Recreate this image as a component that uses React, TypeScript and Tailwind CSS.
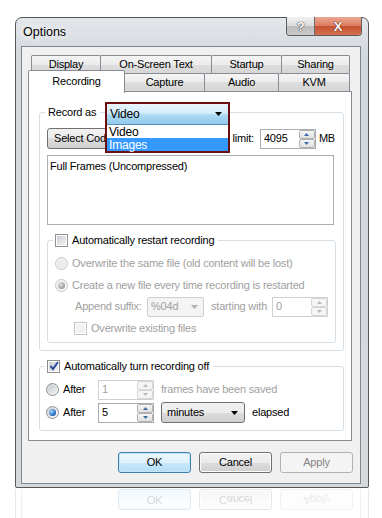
import React from "react";

const F = "font-['Liberation_Sans',Arial,sans-serif] text-[11px] leading-none tracking-[-0.2px]";
const DIS = "text-[#a0a0a0]";

function Spin({ disabled }: { disabled?: boolean }) {
  const arrow = disabled ? "#b8b8b8" : "#3f6aa8";
  const btn = `h-[9px] flex items-center justify-center border rounded-[2px] ${
    disabled ? "border-[#d6d6d6] bg-[#f5f5f5]" : "border-[#b0b0b0] bg-[linear-gradient(#f6f6f6,#e0e0e0)]"
  }`;
  return (
    <div className="w-[16px] h-full flex flex-col">
      <div className={btn}>
        <svg width="5" height="3" viewBox="0 0 5 3">
          <path d="M0 3H5L2.5 0Z" fill={arrow} />
        </svg>
      </div>
      <div className={btn}>
        <svg width="5" height="3" viewBox="0 0 5 3">
          <path d="M0 0H5L2.5 3Z" fill={arrow} />
        </svg>
      </div>
    </div>
  );
}

function SpinInput({ value, disabled, w }: { value: string; disabled?: boolean; w: string }) {
  return (
    <div className={`flex h-[20px] ${w} border ${disabled ? "border-[#d0d0d0]" : "border-[#abadb3]"} bg-white shrink-0`}>
      <div className={`flex-1 flex items-center pl-[3px] ${disabled ? DIS : "text-black"}`}>{value}</div>
      <Spin disabled={disabled} />
    </div>
  );
}

function CheckBox({ checked, disabled }: { checked?: boolean; disabled?: boolean }) {
  return (
    <div
      className={`relative w-[13px] h-[13px] shrink-0 border bg-white p-[1px] ${
        disabled ? "border-[#c4c4c4]" : "border-[#8e8f8f]"
      }`}
    >
      <div
        className={`w-full h-full ${
          disabled ? "bg-[#f2f2f2]" : "bg-[linear-gradient(135deg,#c9cdd3,#f3f3f3)]"
        }`}
      />
      {checked && (
        <svg className="absolute left-[1px] top-[0px]" width="10" height="10" viewBox="0 0 10 10">
          <path d="M1.5 5 L4 8 L9 1" stroke="#2c4d9c" strokeWidth="2" fill="none" />
        </svg>
      )}
    </div>
  );
}

function Radio({ checked, disabled }: { checked?: boolean; disabled?: boolean }) {
  return (
    <div
      className={`w-[13px] h-[13px] shrink-0 rounded-full border flex items-center justify-center ${
        disabled ? "border-[#c6c6c6] bg-[#f4f4f4]" : "border-[#8e8f8f] bg-[linear-gradient(135deg,#d4d4d4,#fbfbfb)]"
      }`}
    >
      {checked ? (
        disabled ? (
          <div className="w-[7px] h-[7px] rounded-full bg-[radial-gradient(circle_at_35%_35%,#e0e0e0,#9a9a9a_75%)]" />
        ) : (
          <div className="w-[7px] h-[7px] rounded-full bg-[radial-gradient(circle_at_35%_35%,#a8d8ff,#1b5cb6_70%)]" />
        )
      ) : (
        <div
          className={`w-[9px] h-[9px] rounded-full ${
            disabled ? "bg-[#ececec]" : "bg-[linear-gradient(135deg,#c8ccd1,#f0f0f0)]"
          }`}
        />
      )}
    </div>
  );
}

function Btn({ label, kind, w = "w-[73px]" }: { label: string; kind: "default" | "normal" | "disabled"; w?: string }) {
  const cls =
    kind === "default"
      ? "border-[#3c7fb1] bg-[linear-gradient(#eef7fd,#dff1fb_50%,#c9e8fa_50%,#b5def5)] text-black shadow-[inset_0_0_0_1px_#c4e5f6]"
      : kind === "normal"
      ? "border-[#707070] bg-[linear-gradient(#f2f2f2,#ebebeb_50%,#dddddd_50%,#cfcfcf)] text-black shadow-[inset_0_0_0_1px_#fbfbfb]"
      : "border-[#adb2b5] bg-[#f4f4f4] text-[#838383]";
  return (
    <div className={`${w} h-[21px] rounded-[3px] border flex items-center justify-center ${cls}`}>{label}</div>
  );
}

function Tab({ label, w, first }: { label: string; w: string; first?: boolean }) {
  return (
    <div
      className={`${w} h-[18px] ${first ? "" : "-ml-px"} border border-b-0 border-[#898c95] rounded-t-[2px] bg-[linear-gradient(#f4f4f4,#ececec_50%,#dedede_50%,#d6d6d6)] flex items-center justify-center text-black`}
    >
      {label}
    </div>
  );
}

function Legend({ children, cls }: { children: React.ReactNode; cls: string }) {
  return <div className={`absolute ${cls} flex items-center gap-[4px] bg-white pl-[2px] pr-[4px] h-[14px]`}>{children}</div>;
}

function ButtonsRow() {
  return (
    <div className="flex justify-end gap-[8px] pr-[7px]">
      <Btn label="OK" kind="default" />
      <Btn label="Cancel" kind="normal" />
      <Btn label="Apply" kind="disabled" />
    </div>
  );
}

export default function App() {
  return (
    <div className={`w-[382px] h-[518px] bg-white overflow-hidden pt-[17px] ${F}`}>
      {/* Window */}
      <div className="relative ml-[15px] w-[354px] h-[471px] border border-[#565656] rounded-t-[7px] rounded-b-[2px] bg-[linear-gradient(#e3e7eb,#d3d8dd_40px,#d6d9dc)]">
        {/* caption buttons */}
        <div className="absolute top-[-1px] right-[6px] flex h-[19px] border border-t-0 border-[#5d5d5d] rounded-b-[4px] overflow-hidden">
          <div className="w-[28px] h-full border-r border-[#6b6b6b] bg-[linear-gradient(#f2f2f2,#dadada_50%,#bcbcbc_50%,#c9c9c9)] flex items-center justify-center text-[13px] font-bold text-white [text-shadow:0_0_1px_#222,0_0_1px_#222]">
            ?
          </div>
          <div className="w-[46px] h-full bg-[linear-gradient(#eaa893,#dc7a5d_50%,#c5502f_50%,#d2714f)] flex items-center justify-center text-[13px] font-bold text-white [text-shadow:0_0_1px_#5a1000,0_0_1px_#5a1000]">
            X
          </div>
        </div>
        {/* title */}
        <div className="h-[28px] flex items-center pl-[7px]">
          <span className="text-[12.5px] tracking-normal text-black [text-shadow:0_0_6px_#ffffff,0_0_8px_#ffffff]">Options</span>
        </div>
        {/* client */}
        <div className="ml-[5px] w-[340px] h-[438px] border border-[#7d8893] bg-[#f0f0f0]">
          <div className="pt-[8px] pl-[6px]">
            <div className="w-[324px]">
              <div className="flex ml-[3px]">
                <Tab label="Display" w="w-[70px]" first />
                <Tab label="On-Screen Text" w="w-[112px]" />
                <Tab label="Startup" w="w-[71px]" />
                <Tab label="Sharing" w="w-[69px]" />
              </div>
              <div className="flex items-start h-[18px]">
                <div className="relative z-10 w-[97px] h-[23px] -mt-[3px] border border-b-0 border-[#898c95] rounded-t-[2px] bg-white flex items-center justify-center pb-[1px] text-black">
                  Recording
                </div>
                <Tab label="Capture" w="w-[81px]" />
                <Tab label="Audio" w="w-[75px]" />
                <Tab label="KVM" w="w-[72px]" />
              </div>
              {/* panel */}
              <div className="w-[324px] h-[350px] border border-[#898c95] bg-white pt-[20px] pl-[10px] text-black">
                {/* Record as group */}
                <div className="relative w-[305px] h-[239px] border border-[#d5dfe5] rounded-[3px] pt-[15px] pl-[7px]">
                  <Legend cls="left-[5px] top-[-8px]">
                    <span className="pl-[1px]">Record as</span>
                  </Legend>
                  {/* open dropdown */}
                  <div className="absolute left-[65px] top-[-11px] z-20 w-[125px] h-[51px] border-2 border-[#6e0f0f] bg-white flex flex-col text-[12px]">
                    <div className="h-[21px] border-b border-[#5a8fbf] bg-[linear-gradient(#eaf6fd,#d3ecfa_45%,#abdaf4_55%,#92caed)] flex items-center justify-between pl-[3px] pr-[6px]">
                      <span>Video</span>
                      <svg width="7" height="4" viewBox="0 0 7 4">
                        <path d="M0 0H7L3.5 4Z" fill="#000" />
                      </svg>
                    </div>
                    <div className="h-[13px] flex items-center pl-[2px]">Video</div>
                    <div className="h-[13px] flex items-center pl-[2px] bg-[#3399ff] text-white">Images</div>
                  </div>
                  <div className="w-[288px] h-[21px] flex items-center">
                    <div className="w-[84px] h-[21px] rounded-[3px] border border-[#707070] bg-[linear-gradient(#f2f2f2,#ebebeb_50%,#dddddd_50%,#cfcfcf)] flex items-center pl-[6px]">
                      Select Codec...
                    </div>
                    <div className="flex-1" />
                    <span>File size limit:</span>
                    <div className="ml-[6px]">
                      <SpinInput value="4095" w="w-[56px]" />
                    </div>
                    <span className="ml-[3px]">MB</span>
                  </div>
                  <div className="mt-[6px] w-[287px] h-[70px] border border-[#abadb3] pl-[2px] pt-[5px]">
                    Full Frames (Uncompressed)
                  </div>
                  {/* restart group */}
                  <div className="relative mt-[15px] w-[289px] h-[103px] border border-[#d5dfe5] rounded-[3px] pt-[11px] pl-[7px]">
                    <Legend cls="left-[5px] top-[-8px]">
                      <CheckBox />
                      <span>Automatically restart recording</span>
                    </Legend>
                    <div className="h-[22px] flex items-center gap-[4px]">
                      <Radio disabled />
                      <span className={DIS}>Overwrite the same file (old content will be lost)</span>
                    </div>
                    <div className="h-[22px] flex items-center gap-[4px]">
                      <Radio disabled checked />
                      <span className={DIS}>Create a new file every time recording is restarted</span>
                    </div>
                    <div className="h-[21px] flex items-center pl-[20px]">
                      <span className={`${DIS} w-[72px]`}>Append suffix:</span>
                      <div className="w-[57px] h-[20px] border border-[#cfcfcf] rounded-[2px] bg-[#f4f4f4] flex items-center justify-between pl-[3px] pr-[5px]">
                        <span className={DIS}>%04d</span>
                        <svg width="7" height="4" viewBox="0 0 7 4">
                          <path d="M0 0H7L3.5 4Z" fill="#b0b0b0" />
                        </svg>
                      </div>
                      <span className={`${DIS} ml-[7px]`}>starting with</span>
                      <div className="ml-[5px]">
                        <SpinInput value="0" w="w-[56px]" disabled />
                      </div>
                    </div>
                    <div className="h-[22px] flex items-center gap-[4px] pl-[19px]">
                      <CheckBox disabled />
                      <span className={DIS}>Overwrite existing files</span>
                    </div>
                  </div>
                </div>
                {/* auto off group */}
                <div className="relative mt-[15px] w-[305px] h-[65px] border border-[#d5dfe5] rounded-[3px] pt-[11px] pl-[6px]">
                  <Legend cls="left-[5px] top-[-8px]">
                    <CheckBox checked />
                    <span>Automatically turn recording off</span>
                  </Legend>
                  <div className="h-[23px] flex items-center">
                    <Radio />
                    <span className="ml-[4px] w-[35px]">After</span>
                    <SpinInput value="1" w="w-[56px]" disabled />
                    <span className={`${DIS} ml-[7px]`}>frames have been saved</span>
                  </div>
                  <div className="h-[23px] flex items-center">
                    <Radio checked />
                    <span className="ml-[4px] w-[35px]">After</span>
                    <SpinInput value="5" w="w-[56px]" />
                    <div className="ml-[7px] w-[84px] h-[21px] rounded-[3px] border border-[#707070] bg-[linear-gradient(#f2f2f2,#ebebeb_50%,#dddddd_50%,#cfcfcf)] flex items-center justify-between pl-[5px] pr-[6px]">
                      <span>minutes</span>
                      <svg width="7" height="4" viewBox="0 0 7 4">
                        <path d="M0 0H7L3.5 4Z" fill="#000" />
                      </svg>
                    </div>
                    <span className="ml-[7px]">elapsed</span>
                  </div>
                </div>
              </div>
            </div>
          </div>
          <div className="mt-[11px]">
            <ButtonsRow />
          </div>
        </div>
      </div>
      {/* reflection */}
      <div className="relative ml-[15px] mt-[1px] w-[354px] h-[30px] overflow-hidden opacity-[0.16] border-x border-[#777]">
        <div className="ml-[5px] w-[340px] h-full border-x border-[#999]">
          <div className="pt-[15px] -scale-y-100">
            <ButtonsRow />
          </div>
        </div>
      </div>
    </div>
  );
}
